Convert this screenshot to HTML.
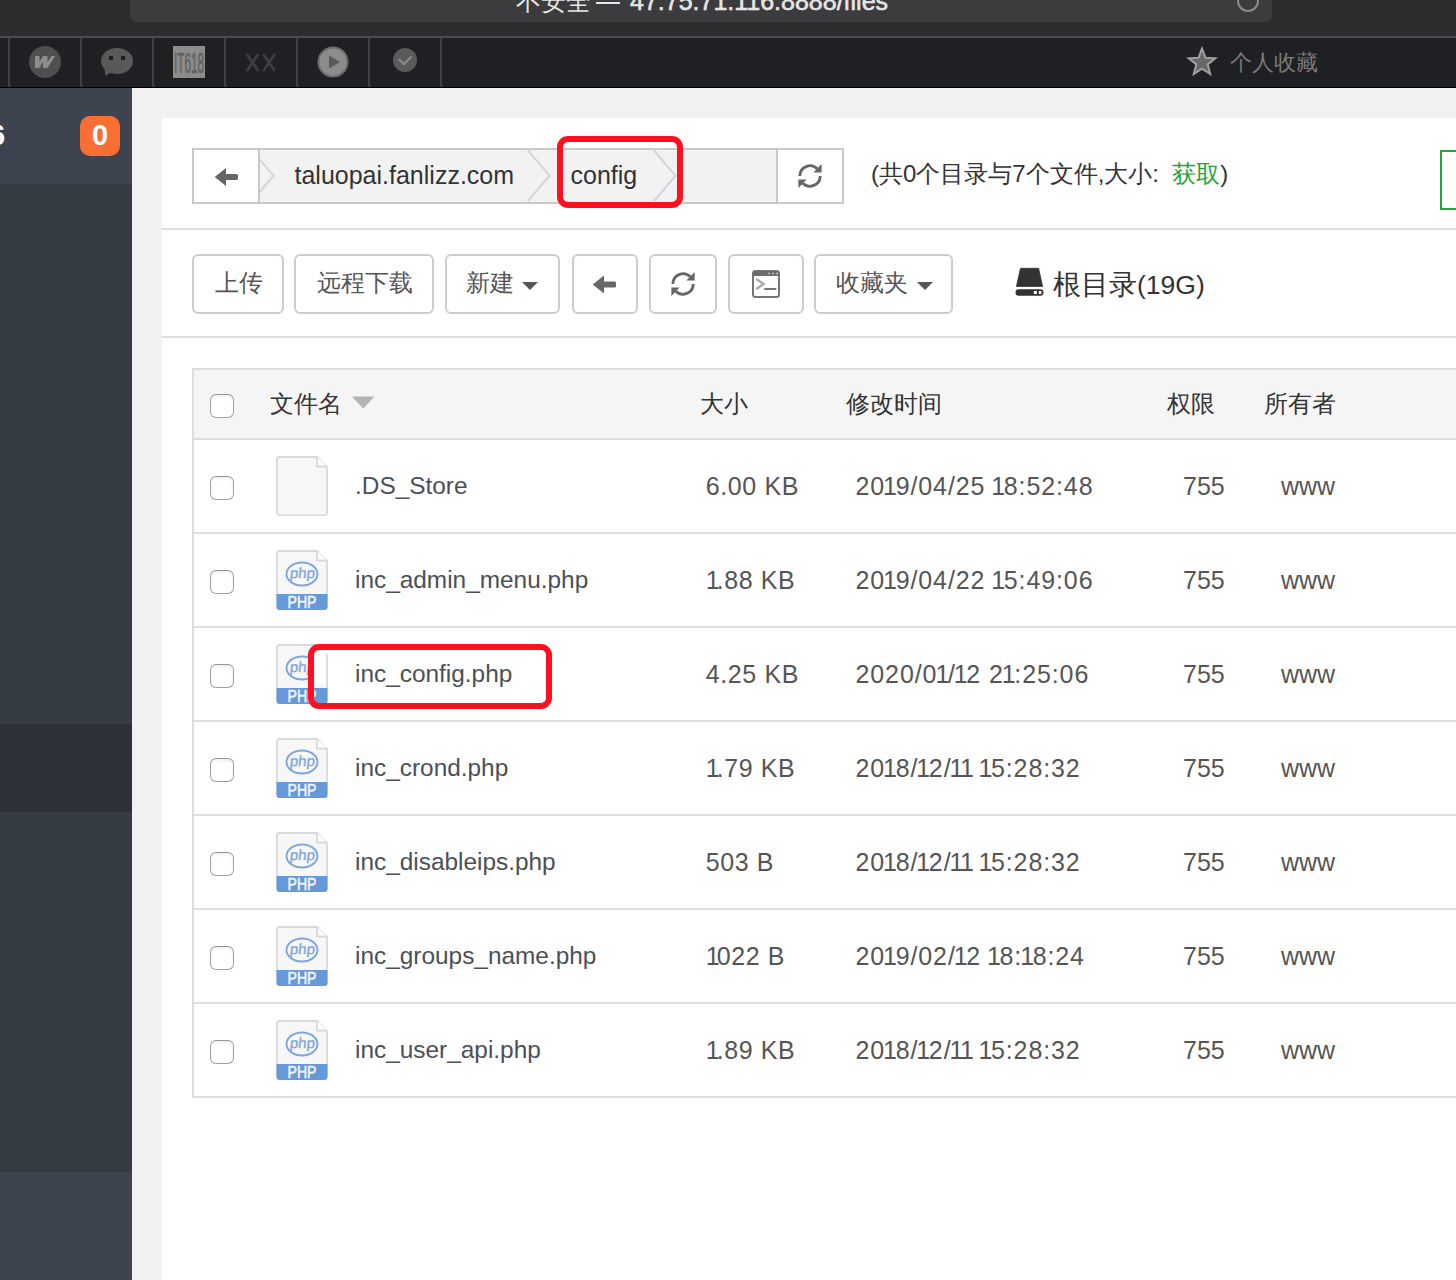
<!DOCTYPE html>
<html><head><meta charset="utf-8">
<style>
*{box-sizing:border-box;margin:0;padding:0}
html,body{width:1456px;height:1280px;overflow:hidden;background:#fff;font-family:"Liberation Sans",sans-serif;position:relative}
.a{position:absolute}
.t{position:absolute;white-space:nowrap;line-height:1}
.btn{position:absolute;top:254px;height:60px;border:2px solid #ccc;border-radius:6px;background:#fff}
.cb{position:absolute;left:210px;width:24px;height:24px;border:1.6px solid #a2a2a2;border-top-color:#959595;border-radius:6px;background:#fff;box-shadow:inset 0 2px 3px rgba(0,0,0,.07)}
.sep{position:absolute;top:38px;width:2px;height:49px;background:#3f4043}
svg{position:absolute;overflow:visible}
</style></head><body>
<svg width="0" height="0" style="position:absolute">
<defs>
<symbol id="page" viewBox="0 0 52 60">
<path d="M2.5 1 H41 L51 11 V56.5 A3 3 0 0 1 48 59.5 H4 A3 3 0 0 1 1 56.5 V4 A3 3 0 0 1 2.5 1 Z" fill="#f7f7f7" stroke="#d9d9d9" stroke-width="1.8"/>
<path d="M41 1 V10.5 H51" fill="#fff" stroke="#d9d9d9" stroke-width="1.8"/>
</symbol>
<symbol id="php" viewBox="0 0 52 60">
<path d="M2.5 1 H41 L51 11 V56.5 A3 3 0 0 1 48 59.5 H4 A3 3 0 0 1 1 56.5 V4 A3 3 0 0 1 2.5 1 Z" fill="#f7f7f7" stroke="#d9d9d9" stroke-width="1.8"/>
<path d="M41 1 V10.5 H51" fill="#fff" stroke="#d9d9d9" stroke-width="1.8"/>
<ellipse cx="26" cy="24" rx="15.5" ry="11.5" fill="none" stroke="#7ea6de" stroke-width="1.9"/>
<text x="13.5" y="28.5" font-family="Liberation Sans" font-size="14.5" fill="#80a8df" stroke="#80a8df" stroke-width="0.35" textLength="25" lengthAdjust="spacingAndGlyphs" transform="skewX(-6) translate(3 0)">php</text>
<path d="M0.5 44 H51.5 V56.5 A3.5 3.5 0 0 1 48 60 H4 A3.5 3.5 0 0 1 0.5 56.5 Z" fill="#6699d9"/>
<text x="11.5" y="58" font-family="Liberation Sans" font-size="16" fill="#f2f7ff" stroke="#f2f7ff" stroke-width="0.5" textLength="29" lengthAdjust="spacingAndGlyphs">PHP</text>
</symbol>
</defs></svg>
<div class="a" style="left:0;top:0;width:1456px;height:36px;background:#2c2d2f"></div>
<div class="a" style="left:130px;top:-12px;width:1142px;height:34px;background:#3c3c3e;border-radius:7px"></div>
<div class="t" style="left:516px;top:-11px;font-size:25px;color:#e6e6e6">不安全<span style="display:inline-block;width:39px;height:1px"></span><span style="-webkit-text-stroke:0.6px #e6e6e6">47.75.71.116:8888/files</span></div>
<div class="a" style="left:596px;top:1.5px;width:24px;height:2.5px;background:#e6e6e6"></div>
<div class="a" style="left:1237px;top:-10px;width:22px;height:22px;border:2px solid #8c8c8c;border-radius:50%"></div>
<div class="a" style="left:0;top:36px;width:1456px;height:2px;background:#4a4b4d"></div>
<div class="a" style="left:0;top:38px;width:1456px;height:49px;background:#1f2023"></div>
<div class="a" style="left:0;top:87px;width:1456px;height:1px;background:#000"></div>
<div class="sep" style="left:8px"></div>
<div class="sep" style="left:80px"></div>
<div class="sep" style="left:152px"></div>
<div class="sep" style="left:224px"></div>
<div class="sep" style="left:296px"></div>
<div class="sep" style="left:368px"></div>
<div class="sep" style="left:440px"></div>
<svg style="left:0;top:38px" width="460" height="49" viewBox="0 38 460 49">
<circle cx="45" cy="62" r="16" fill="#4f4f4f"/>
<path d="M35 56 L39.5 56 L39.5 62 L43 56 L47.5 56 L47.5 62 L51.5 56 L55 56 L47.5 68 L43 68 L43 62 L39 68 L35 68 Z" fill="#8e8e8e"/>
<ellipse cx="117" cy="61" rx="16" ry="13" fill="#595959"/>
<path d="M104.5 69 L105.5 76 L111 72 Z" fill="#595959"/>
<rect x="109" y="56" width="4" height="4" fill="#1f2023"/>
<rect x="121" y="56" width="4" height="4" fill="#1f2023"/>
<rect x="173" y="46" width="32" height="32" fill="#8c8c8c"/>
<text x="174" y="73.4" font-family="Liberation Sans" font-size="29" fill="#626262" stroke="#626262" stroke-width="0.7" textLength="30" lengthAdjust="spacingAndGlyphs">IT618</text>
<path d="M247.5 55 L257.5 70 M257.5 55 L247.5 70 M264 55 L274 70 M274 55 L264 70" stroke="#3e3e40" stroke-width="2.8" stroke-linecap="round"/>
<circle cx="333" cy="62" r="14.5" fill="#8c8c8c" stroke="#6c6c6c" stroke-width="2"/>
<path d="M329 55.5 L340 62 L329 68.5 Z" fill="#5a5a5a"/>
<circle cx="405" cy="60" r="12" fill="#5a5a5a"/>
<path d="M398.5 59 L404 64 L411.5 56.5" stroke="#8c8c8c" stroke-width="2.2" fill="none"/>
</svg>
<svg style="left:0;top:0" width="1300" height="90" viewBox="0 0 1300 90">
<path d="M1202.00 48.60 L1205.53 57.75 L1215.31 58.27 L1207.71 64.45 L1210.23 73.93 L1202.00 68.60 L1193.77 73.93 L1196.29 64.45 L1188.69 58.27 L1198.47 57.75 Z" fill="#686868" stroke="#a0a0a0" stroke-width="2" stroke-linejoin="miter"/>
</svg>
<div class="t" style="left:1230px;top:52.38px;font-size:22px;color:#7a7a7a;">个人收藏</div>
<div class="a" style="left:0;top:88px;width:132px;height:1192px;background:#363c44"></div>
<div class="a" style="left:0;top:88px;width:132px;height:96px;background:#3d4450"></div>
<div class="a" style="left:0;top:724px;width:132px;height:88px;background:#2c3038"></div>
<div class="a" style="left:0;top:1172px;width:132px;height:108px;background:#3d4450"></div>
<div class="a" style="left:80px;top:116px;width:40px;height:40px;background:#f86e33;border-radius:10px"></div>
<div class="t" style="left:92px;top:121.45px;font-size:29px;color:#fff;font-weight:bold">0</div>
<div class="t" style="left:-11px;top:121.45px;font-size:29px;color:#fff;font-weight:bold">6</div>
<div class="a" style="left:132px;top:88px;width:1324px;height:1192px;background:#f1f1f1"></div>
<div class="a" style="left:162px;top:118px;width:1294px;height:1162px;background:#fff"></div>
<div class="a" style="left:192px;top:148px;width:652px;height:56px;border:2px solid #c9c9c9;background:#f2f2f2"></div>
<svg style="left:0;top:0" width="900" height="240" viewBox="0 0 900 240">
<path d="M252 150.5 L273.5 175.7 L252 201 M528 150.5 L549.5 175.7 L528 201 M654 150.5 L675.5 175.7 L654 201" stroke="#d3d4dd" stroke-width="2" fill="none"/>
</svg>
<div class="a" style="left:194px;top:150px;width:64px;height:52px;background:#fff"></div>
<div class="a" style="left:258px;top:150px;width:2px;height:52px;background:#c9c9c9"></div>
<div class="a" style="left:776px;top:150px;width:2px;height:52px;background:#c9c9c9"></div>
<div class="a" style="left:778px;top:150px;width:64px;height:52px;background:#fff"></div>
<svg style="left:0;top:0" width="900" height="240" viewBox="0 0 900 240">
<path d="M214.7 177 L226 168 L226 174 L236.5 174 Q238 174 238 175.5 L238 178.5 Q238 180 236.5 180 L226 180 L226 186 Z" fill="#666"/>
</svg>
<div class="t" style="left:294.5px;top:162.84px;font-size:25px;color:#333;">taluopai.fanlizz.com</div>
<div class="t" style="left:570.5px;top:162.84px;font-size:25px;color:#333;">config</div>
<div class="a" style="left:557px;top:136px;width:126px;height:72px;border:6px solid #ff1020;border-radius:11px"></div>
<svg style="left:797px;top:163px" width="26" height="26" viewBox="-13 -13 26 26">
<path d="M-10.2 0 A10.2 10.2 0 0 1 7.2 -7.2" stroke="#666" stroke-width="2.8" fill="none"/>
<path d="M11.6 -12 L11.6 -3.6 L3.4 -3.6 Z" fill="#666"/>
<path d="M10.2 0 A10.2 10.2 0 0 1 -7.2 7.2" stroke="#666" stroke-width="2.8" fill="none"/>
<path d="M-11.6 12 L-11.6 3.6 L-3.4 3.6 Z" fill="#666"/>
</svg>
<div class="t" style="left:871px;top:161.68px;font-size:24px;color:#333;">(共0个目录与7个文件,大小:&nbsp; <span style="color:#20a53a">获取</span>)</div>
<div class="a" style="left:1440px;top:150px;width:40px;height:60px;border:2px solid #20a53a"></div>
<div class="a" style="left:162px;top:228px;width:1294px;height:2px;background:#ddd"></div>
<div class="btn" style="left:192px;width:92px"></div>
<div class="btn" style="left:294px;width:140px"></div>
<div class="btn" style="left:445px;width:115px"></div>
<div class="btn" style="left:572px;width:66px"></div>
<div class="btn" style="left:649px;width:68px"></div>
<div class="btn" style="left:728px;width:76px"></div>
<div class="btn" style="left:814px;width:139px"></div>
<div class="t" style="left:215px;top:271.18px;font-size:24px;color:#555;">上传</div>
<div class="t" style="left:317px;top:271.18px;font-size:24px;color:#555;">远程下载</div>
<div class="t" style="left:466px;top:271.18px;font-size:24px;color:#555;">新建</div>
<div class="t" style="left:836px;top:271.18px;font-size:24px;color:#555;">收藏夹</div>
<svg style="left:0;top:240px" width="1000" height="80" viewBox="0 240 1000 80">
<path d="M522 282 L538 282 L530 290 Z M917 282 L933 282 L925 290 Z" fill="#555"/>
<path d="M592.7 284.5 L604 275.5 L604 281.5 L614.5 281.5 Q616 281.5 616 283 L616 286 Q616 287.5 614.5 287.5 L604 287.5 L604 293.5 Z" fill="#666"/>
<rect x="753" y="271" width="26" height="26" rx="2.5" fill="#fff" stroke="#767676" stroke-width="2"/>
<rect x="753" y="271" width="26" height="5" fill="#6c6c6c"/>
<circle cx="769" cy="273.5" r="1.1" fill="#bbb"/><circle cx="773" cy="273.5" r="1.1" fill="#bbb"/><circle cx="777" cy="273.5" r="1.1" fill="#bbb"/>
<path d="M757 279.5 L763.5 284 L757 288.5" stroke="#adadad" stroke-width="2.6" fill="none" stroke-linecap="round"/>
<path d="M765 289 L775.5 289" stroke="#777" stroke-width="2.2" stroke-linecap="round"/>
<path d="M1020.5 268.3 L1038.6 268.3 L1042.6 286.4 L1016.4 286.4 Z" fill="#333" stroke="#333" stroke-width="0.8" stroke-linejoin="round"/>
<rect x="1015.5" y="289.2" width="28" height="6.5" rx="3.2" fill="#333"/>
<rect x="1033.8" y="291" width="3" height="3" fill="#fff"/><rect x="1038.9" y="291" width="2.5" height="3" fill="#fff"/>
</svg>
<svg style="left:670px;top:271px" width="26" height="26" viewBox="-13 -13 26 26">
<path d="M-10.2 0 A10.2 10.2 0 0 1 7.2 -7.2" stroke="#666" stroke-width="2.8" fill="none"/>
<path d="M11.6 -12 L11.6 -3.6 L3.4 -3.6 Z" fill="#666"/>
<path d="M10.2 0 A10.2 10.2 0 0 1 -7.2 7.2" stroke="#666" stroke-width="2.8" fill="none"/>
<path d="M-11.6 12 L-11.6 3.6 L-3.4 3.6 Z" fill="#666"/>
</svg>
<div class="t" style="left:1053px;top:270.80px;font-size:28px;color:#333;">根目录<span style="font-size:26.5px">(19G)</span></div>
<div class="a" style="left:162px;top:336px;width:1294px;height:2px;background:#ddd"></div>
<div class="a" style="left:192px;top:368px;width:1264px;height:730px;border-left:2px solid #ddd;border-top:2px solid #ddd"></div>
<div class="a" style="left:194px;top:370px;width:1262px;height:68px;background:#f5f5f5"></div>
<div class="a" style="left:194px;top:438px;width:1262px;height:2px;background:#ddd"></div>
<div class="cb" style="top:394px"></div>
<div class="t" style="left:270px;top:391.68px;font-size:24px;color:#333;">文件名</div>
<svg style="left:352px;top:396px" width="23" height="13" viewBox="0 0 23 13"><path d="M0 0.5 H22.5 L11.25 12.5 Z" fill="#b3b3b3"/></svg>
<div class="t" style="left:700px;top:391.68px;font-size:24px;color:#333;">大小</div>
<div class="t" style="left:846px;top:391.68px;font-size:24px;color:#333;">修改时间</div>
<div class="t" style="left:1167px;top:391.68px;font-size:24px;color:#333;">权限</div>
<div class="t" style="left:1264px;top:391.68px;font-size:24px;color:#333;">所有者</div>
<div class="a" style="left:194px;top:532px;width:1262px;height:2px;background:#ddd"></div>
<div class="cb" style="top:476px"></div>
<svg style="left:276px;top:456px" width="52" height="60" viewBox="0 0 52 60"><use href="#page"/></svg>
<div class="t" style="left:355px;top:474.05px;font-size:24.4px;color:#4b5056;">.DS_Store</div>
<div class="t" style="left:705.8px;top:473.84px;font-size:25.0px;color:#555;letter-spacing:0.6px">6.00 KB</div>
<div class="t" style="left:855.5px;top:474.04px;font-size:25.0px;color:#555;letter-spacing:0.9px">20<span style="margin-left:-2px;letter-spacing:-1.38px">1</span>9/04/25 <span style="margin-left:-2px;letter-spacing:-1.38px">1</span>8:52:48</div>
<div class="t" style="left:1183px;top:473.84px;font-size:25px;color:#555;">755</div>
<div class="t" style="left:1281px;top:473.84px;font-size:25px;color:#555;">www</div>
<div class="a" style="left:194px;top:626px;width:1262px;height:2px;background:#ddd"></div>
<div class="cb" style="top:570px"></div>
<svg style="left:276px;top:550px" width="52" height="60" viewBox="0 0 52 60"><use href="#php"/></svg>
<div class="t" style="left:355px;top:568.05px;font-size:24.4px;color:#4b5056;">inc_admin_menu.php</div>
<div class="t" style="left:705.8px;top:567.84px;font-size:25.0px;color:#555;letter-spacing:0.6px"><span style="margin-left:0px;letter-spacing:-3.00px">1</span>.88 KB</div>
<div class="t" style="left:855.5px;top:568.04px;font-size:25.0px;color:#555;letter-spacing:0.9px">20<span style="margin-left:-2px;letter-spacing:-1.38px">1</span>9/04/22 <span style="margin-left:-2px;letter-spacing:-1.38px">1</span>5:49:06</div>
<div class="t" style="left:1183px;top:567.84px;font-size:25px;color:#555;">755</div>
<div class="t" style="left:1281px;top:567.84px;font-size:25px;color:#555;">www</div>
<div class="a" style="left:194px;top:720px;width:1262px;height:2px;background:#ddd"></div>
<div class="cb" style="top:664px"></div>
<svg style="left:276px;top:644px" width="52" height="60" viewBox="0 0 52 60"><use href="#php"/></svg>
<div class="t" style="left:355px;top:662.05px;font-size:24.4px;color:#4b5056;">inc_config.php</div>
<div class="t" style="left:705.8px;top:661.84px;font-size:25.0px;color:#555;letter-spacing:0.6px">4.25 KB</div>
<div class="t" style="left:855.5px;top:662.04px;font-size:25.0px;color:#555;letter-spacing:0.9px">2020/0<span style="margin-left:-2px;letter-spacing:-1.38px">1</span>/<span style="margin-left:-2px;letter-spacing:-1.38px">1</span>2 2<span style="margin-left:-2px;letter-spacing:-1.38px">1</span>:25:06</div>
<div class="t" style="left:1183px;top:661.84px;font-size:25px;color:#555;">755</div>
<div class="t" style="left:1281px;top:661.84px;font-size:25px;color:#555;">www</div>
<div class="a" style="left:194px;top:814px;width:1262px;height:2px;background:#ddd"></div>
<div class="cb" style="top:758px"></div>
<svg style="left:276px;top:738px" width="52" height="60" viewBox="0 0 52 60"><use href="#php"/></svg>
<div class="t" style="left:355px;top:756.05px;font-size:24.4px;color:#4b5056;">inc_crond.php</div>
<div class="t" style="left:705.8px;top:755.84px;font-size:25.0px;color:#555;letter-spacing:0.6px"><span style="margin-left:0px;letter-spacing:-3.00px">1</span>.79 KB</div>
<div class="t" style="left:855.5px;top:756.04px;font-size:25.0px;color:#555;letter-spacing:0.9px">20<span style="margin-left:-2px;letter-spacing:-1.38px">1</span>8/<span style="margin-left:-2px;letter-spacing:-1.38px">1</span>2/<span style="margin-left:-2px;letter-spacing:-1.38px">1</span><span style="margin-left:-2px;letter-spacing:-1.38px">1</span> <span style="margin-left:-2px;letter-spacing:-1.38px">1</span>5:28:32</div>
<div class="t" style="left:1183px;top:755.84px;font-size:25px;color:#555;">755</div>
<div class="t" style="left:1281px;top:755.84px;font-size:25px;color:#555;">www</div>
<div class="a" style="left:194px;top:908px;width:1262px;height:2px;background:#ddd"></div>
<div class="cb" style="top:852px"></div>
<svg style="left:276px;top:832px" width="52" height="60" viewBox="0 0 52 60"><use href="#php"/></svg>
<div class="t" style="left:355px;top:850.05px;font-size:24.4px;color:#4b5056;">inc_disableips.php</div>
<div class="t" style="left:705.8px;top:849.84px;font-size:25.0px;color:#555;letter-spacing:0.6px">503 B</div>
<div class="t" style="left:855.5px;top:850.04px;font-size:25.0px;color:#555;letter-spacing:0.9px">20<span style="margin-left:-2px;letter-spacing:-1.38px">1</span>8/<span style="margin-left:-2px;letter-spacing:-1.38px">1</span>2/<span style="margin-left:-2px;letter-spacing:-1.38px">1</span><span style="margin-left:-2px;letter-spacing:-1.38px">1</span> <span style="margin-left:-2px;letter-spacing:-1.38px">1</span>5:28:32</div>
<div class="t" style="left:1183px;top:849.84px;font-size:25px;color:#555;">755</div>
<div class="t" style="left:1281px;top:849.84px;font-size:25px;color:#555;">www</div>
<div class="a" style="left:194px;top:1002px;width:1262px;height:2px;background:#ddd"></div>
<div class="cb" style="top:946px"></div>
<svg style="left:276px;top:926px" width="52" height="60" viewBox="0 0 52 60"><use href="#php"/></svg>
<div class="t" style="left:355px;top:944.05px;font-size:24.4px;color:#4b5056;">inc_groups_name.php</div>
<div class="t" style="left:705.8px;top:943.84px;font-size:25.0px;color:#555;letter-spacing:0.6px"><span style="margin-left:0px;letter-spacing:-3.00px">1</span>022 B</div>
<div class="t" style="left:855.5px;top:944.04px;font-size:25.0px;color:#555;letter-spacing:0.9px">20<span style="margin-left:-2px;letter-spacing:-1.38px">1</span>9/02/<span style="margin-left:-2px;letter-spacing:-1.38px">1</span>2 <span style="margin-left:-2px;letter-spacing:-1.38px">1</span>8:<span style="margin-left:-2px;letter-spacing:-1.38px">1</span>8:24</div>
<div class="t" style="left:1183px;top:943.84px;font-size:25px;color:#555;">755</div>
<div class="t" style="left:1281px;top:943.84px;font-size:25px;color:#555;">www</div>
<div class="a" style="left:194px;top:1096px;width:1262px;height:2px;background:#ddd"></div>
<div class="cb" style="top:1040px"></div>
<svg style="left:276px;top:1020px" width="52" height="60" viewBox="0 0 52 60"><use href="#php"/></svg>
<div class="t" style="left:355px;top:1038.05px;font-size:24.4px;color:#4b5056;">inc_user_api.php</div>
<div class="t" style="left:705.8px;top:1037.84px;font-size:25.0px;color:#555;letter-spacing:0.6px"><span style="margin-left:0px;letter-spacing:-3.00px">1</span>.89 KB</div>
<div class="t" style="left:855.5px;top:1038.04px;font-size:25.0px;color:#555;letter-spacing:0.9px">20<span style="margin-left:-2px;letter-spacing:-1.38px">1</span>8/<span style="margin-left:-2px;letter-spacing:-1.38px">1</span>2/<span style="margin-left:-2px;letter-spacing:-1.38px">1</span><span style="margin-left:-2px;letter-spacing:-1.38px">1</span> <span style="margin-left:-2px;letter-spacing:-1.38px">1</span>5:28:32</div>
<div class="t" style="left:1183px;top:1037.84px;font-size:25px;color:#555;">755</div>
<div class="t" style="left:1281px;top:1037.84px;font-size:25px;color:#555;">www</div>
<div class="a" style="left:314px;top:650px;width:12px;height:33px;background:#fff"></div>
<div class="a" style="left:308px;top:644px;width:244px;height:65px;border:6px solid #ff1020;border-radius:11px"></div>
</body></html>
